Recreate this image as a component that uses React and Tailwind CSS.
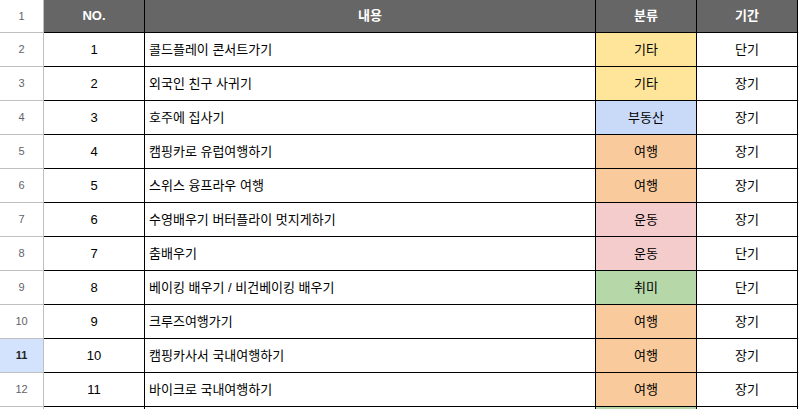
import React from "react";

const rows = [
  { no: 1, text: "콜드플레이 콘서트가기", cat: "기타", term: "단기" },
  { no: 2, text: "외국인 친구 사귀기", cat: "기타", term: "장기" },
  { no: 3, text: "호주에 집사기", cat: "부동산", term: "장기" },
  { no: 4, text: "캠핑카로 유럽여행하기", cat: "여행", term: "장기" },
  { no: 5, text: "스위스 융프라우 여행", cat: "여행", term: "장기" },
  { no: 6, text: "수영배우기 버터플라이 멋지게하기", cat: "운동", term: "장기" },
  { no: 7, text: "춤배우기", cat: "운동", term: "단기" },
  { no: 8, text: "베이킹 배우기 / 비건베이킹 배우기", cat: "취미", term: "단기" },
  { no: 9, text: "크루즈여행가기", cat: "여행", term: "장기" },
  { no: 10, text: "캠핑카사서 국내여행하기", cat: "여행", term: "장기" },
  { no: 11, text: "바이크로 국내여행하기", cat: "여행", term: "장기" },
  { no: 12, text: "", cat: "취미", term: "" },
];

// 분류별 배경색
const catColors = {
  기타: "bg-[#ffe599]",
  부동산: "bg-[#c9daf8]",
  여행: "bg-[#f9cb9c]",
  운동: "bg-[#f4cccc]",
  취미: "bg-[#b6d7a8]",
};

const font = "font-['Liberation_Sans','Noto_Sans_CJK_KR',sans-serif]";

function RowHeader({ n, selected }) {
  return (
    <div
      className={`w-[44px] shrink-0 border-r border-b border-[#c0c0c0] flex items-center justify-center text-[11px] ${
        selected ? "bg-[#d3e3fd] text-[#1f1f1f] font-bold" : "bg-white text-[#5f6368]"
      }`}
    >
      {n}
    </div>
  );
}

export default function App() {
  return (
    <div className={`w-[799px] h-[409px] overflow-hidden bg-white text-[13px] text-[#000] ${font}`}>
      {/* 헤더 */}
      <div className="flex h-[33px]">
        <RowHeader n={1} />
        <div className="w-[101px] shrink-0 bg-[#666666] border-r border-b border-black flex items-center justify-center text-white font-bold">
          NO.
        </div>
        <div className="w-[451px] shrink-0 bg-[#666666] border-r border-b border-black flex items-center justify-center text-white font-bold">
          내용
        </div>
        <div className="w-[101px] shrink-0 bg-[#666666] border-r border-b border-black flex items-center justify-center text-white font-bold">
          분류
        </div>
        <div className="w-[101px] shrink-0 bg-[#666666] border-r border-b border-black flex items-center justify-center text-white font-bold">
          기간
        </div>
        <div className="flex-1 border-b border-[#e2e2e2]"></div>
      </div>

      {/* 데이터 */}
      {rows.map((r, i) => (
        <div key={r.no} className="flex h-[34px]">
          {/* 마지막 줄은 화면 밖이라 번호 생략 */}
          <RowHeader n={r.text ? i + 2 : ""} selected={i + 2 === 11} />
          <div className="w-[101px] shrink-0 border-r border-b border-black flex items-center justify-center">
            {r.text ? r.no : ""}
          </div>
          <div className="w-[451px] shrink-0 border-r border-b border-black flex items-center pl-[4px] whitespace-nowrap">
            {r.text}
          </div>
          <div
            className={`w-[101px] shrink-0 border-r border-b border-black flex items-center justify-center ${catColors[r.cat]}`}
          >
            {r.text ? r.cat : ""}
          </div>
          <div className="w-[101px] shrink-0 border-r border-b border-black flex items-center justify-center">
            {r.term}
          </div>
          <div className="flex-1 border-b border-[#e2e2e2]"></div>
        </div>
      ))}
    </div>
  );
}
